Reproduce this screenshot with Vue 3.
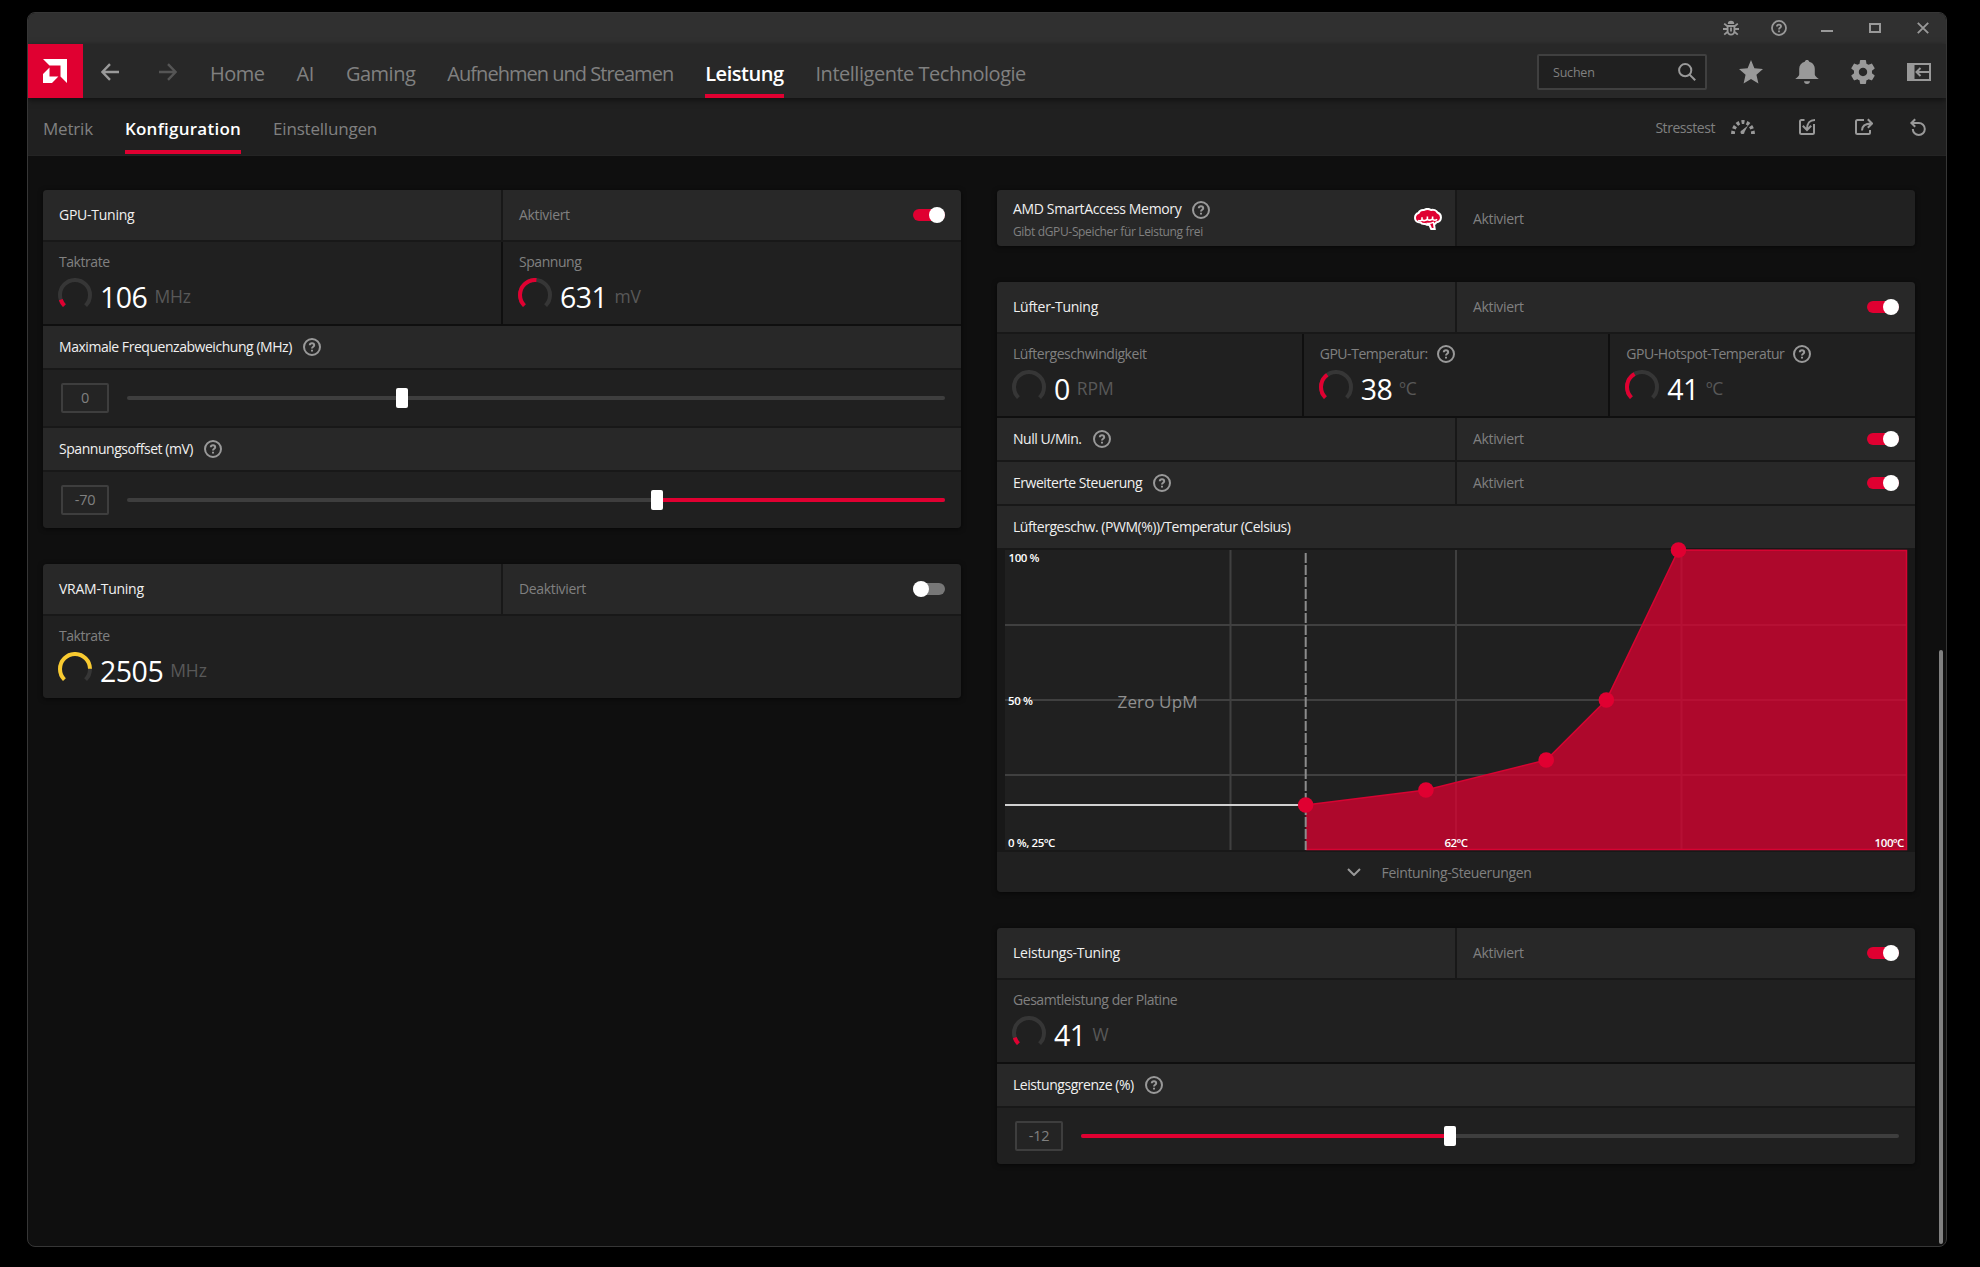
<template>
  <div class="desktop">
    <div class="window">
      <div class="titlebar">
        <svg class="icon" viewBox="0 0 16 16" width="16" height="16" fill="none" stroke="currentColor" stroke-width="1.8">
          <path d="M4.6 6h6.8v4.8a3.4 3.9 0 0 1-6.8 0zM4.4 6.2 1.2 3.6M11.6 6.2l3.2-2.6M0 9h4.6M11.4 9H16M1.2 14.6l3.4-2.8M14.8 14.6l-3.4-2.8M8 7.5v4" />
          <path d="M4.8 3.9a3.2 3.2 0 0 1 6.4 0z" fill="currentColor" stroke="none" />
        </svg>
        <svg class="icon" viewBox="0 0 18 18" width="16" height="16" fill="none" stroke="currentColor" stroke-width="2">
          <circle cx="9" cy="9" r="7.9" />
          <path d="M6.7 7.3C6.7 5.9 7.7 5.1 9 5.1s2.3.8 2.3 2.1c0 1.6-2.3 1.6-2.3 3.4M9 11.9v2" />
        </svg>
        <svg class="icon" viewBox="0 0 16 16" width="16" height="16"><path d="M2 10h12v2H2z" fill="currentColor" /></svg>
        <svg class="icon" viewBox="0 0 16 16" width="16" height="16"><path d="M3 4h10v8H3z" fill="none" stroke="currentColor" stroke-width="2" /></svg>
        <svg class="icon" viewBox="0 0 16 16" width="16" height="16"><path d="m2.8 2.8 10.4 10.4M13.2 2.8 2.8 13.2" fill="none" stroke="currentColor" stroke-width="1.9" /></svg>
      </div>

      <div class="navbar">
        <div class="logo">
          <svg viewBox="0 0 24 24" width="24" height="24" fill="#fff">
            <path d="M0 0h24v24l-6.5-6.5v-11h-11z" />
            <path d="M6.5 8.6v8.9h8.9L9 24H0v-8.9z" />
          </svg>
        </div>
        <svg class="arrow back" viewBox="0 0 18 18" width="18" height="18"><path d="M18 9H1.8M9 1.2 1.4 9 9 16.8" /></svg>
        <svg class="arrow forward" viewBox="0 0 18 18" width="18" height="18"><path d="M0 9h16.2M9 1.2 16.6 9 9 16.8" /></svg>
        <nav class="tabs">
          <a v-for="tab in mainTabs" :key="tab.title" :class="['tab', { active: tab.active, tight: tab.tight }]">{{ tab.title }}</a>
        </nav>
        <div class="search">
          <span>Suchen</span>
          <svg class="icon" viewBox="0 0 18 18" width="18" height="18" fill="none" stroke="currentColor" stroke-width="2">
            <circle cx="7.2" cy="7.2" r="6.1" />
            <path d="m11.6 11.6 5.6 5.6" />
          </svg>
        </div>
        <div class="nav-icons">
          <svg class="icon" viewBox="2 2 20 19" width="24" height="23.5" preserveAspectRatio="none" fill="currentColor">
            <path d="M12 17.27 18.18 21l-1.64-7.03L22 9.24l-7.19-.61L12 2 9.19 8.63 2 9.24l5.46 4.73L5.82 21z" />
          </svg>
          <svg class="icon" viewBox="0 0 24 24" width="24" height="24" fill="currentColor">
            <path d="M12 0c1.2 0 2 .7 2.2 1.7 3.7.9 5.6 3.8 5.6 7.3v5.5c0 1.4 1.6 2.6 4 4.5H.2c2.4-1.9 4-3.1 4-4.5V9c0-3.5 1.9-6.4 5.6-7.3C10 .7 10.8 0 12 0zM9 21.3h6c0 1.5-1.2 2.7-3 2.7s-3-1.2-3-2.7z" />
          </svg>
          <svg class="icon" viewBox="2 2 20 20" width="24" height="24" fill="currentColor">
            <path d="M19.43 12.98c.04-.32.07-.64.07-.98s-.03-.66-.07-.98l2.11-1.65c.19-.15.24-.42.12-.64l-2-3.46c-.12-.22-.39-.3-.61-.22l-2.49 1c-.52-.4-1.08-.73-1.69-.98l-.38-2.65C14.46 2.18 14.25 2 14 2h-4c-.25 0-.46.18-.49.42l-.38 2.65c-.61.25-1.17.59-1.69.98l-2.49-1c-.23-.09-.49 0-.61.22l-2 3.46c-.13.22-.07.49.12.64l2.11 1.65c-.04.32-.07.65-.07.98s.03.66.07.98l-2.11 1.65c-.19.15-.24.42-.12.64l2 3.46c.12.22.39.3.61.22l2.49-1c.52.4 1.08.73 1.69.98l.38 2.65c.03.24.24.42.49.42h4c.25 0 .46-.18.49-.42l.38-2.65c.61-.25 1.17-.59 1.69-.98l2.49 1c.23.09.49 0 .61-.22l2-3.46c.12-.22.07-.49-.12-.64l-2.11-1.65zM12 15.5c-1.93 0-3.5-1.57-3.5-3.5s1.57-3.5 3.5-3.5 3.5 1.57 3.5 3.5-1.57 3.5-3.5 3.5z" />
          </svg>
          <svg class="icon" viewBox="0 0 24 18" width="24" height="18" fill="none" stroke="currentColor" stroke-width="2">
            <path d="M1 1h22v16H1zM23 9H9.5M13.5 5 9.5 9l4 4" />
            <path d="M0 0h7.5v18H0z" fill="currentColor" stroke="none" />
          </svg>
        </div>
      </div>

      <div class="subbar">
        <nav class="subtabs">
          <a v-for="tab in subTabs" :key="tab" :class="['tab', { active: tab === 'Konfiguration' }]">{{ tab }}</a>
        </nav>
        <div class="tools">
          <span class="stress-label">Stresstest</span>
          <svg class="icon stress" viewBox="0 0 24 14" width="24" height="14">
            <path d="M2 14A10 12 0 0 1 22 14" pathLength="90" fill="none" stroke="currentColor" stroke-width="3.8" stroke-dasharray="8 5.66" />
            <path d="m11 10.2 6-4.7-3.5 6.5a2 2 0 1 1-2.5-1.8z" fill="currentColor" />
          </svg>
          <svg class="icon" viewBox="0 0 18 18" width="18" height="18" fill="none" stroke="currentColor" stroke-width="2">
            <path d="M6.5 2h-3A1.5 1.5 0 0 0 2 3.5v11A1.5 1.5 0 0 0 3.5 16h11a1.5 1.5 0 0 0 1.5-1.5V6M17 2c-5 0-8 2-8 9.5M4.8 7.8 9 12l4.2-4.2" />
          </svg>
          <svg class="icon" viewBox="0 0 18 18" width="18" height="18" fill="none" stroke="currentColor" stroke-width="2">
            <path d="M9 2H2.5A1.5 1.5 0 0 0 1 3.5v11A1.5 1.5 0 0 0 2.5 16h11a1.5 1.5 0 0 0 1.5-1.5V12M7 12.5C7 8 10 5.500 16.5 5.500M12.8 1.3 17 5.500l-4.2 4.2" />
          </svg>
          <svg class="icon undo" viewBox="0 0 18 18" width="18" height="18" fill="none" stroke="currentColor" stroke-width="2">
            <path d="M2.5 5h7.3a6 6 0 1 1-6 6M6.2 1.2 2.4 5l3.8 3.8" />
          </svg>
        </div>
      </div>

      <main class="content">
        <div v-for="(column, c) in columns" :key="c" class="column">
          <section v-for="panel in column" :key="panel.id" class="panel">
            <div v-for="(row, r) in panel.rows" :key="r" :class="['row', row.type]">
              <!-- feature with a switch or a plain state -->
              <template v-if="row.type === 'header' || row.type === 'option' || row.type === 'feature'">
                <div class="cell">
                  <div class="caption">
                    <div class="title">
                      <span class="text">{{ row.title }}</span>
                      <svg v-if="row.help" class="help" viewBox="0 0 18 18"><use href="#help" /></svg>
                    </div>
                    <div v-if="row.subtitle" class="subtitle">{{ row.subtitle }}</div>
                  </div>
                  <svg v-if="row.subtitle" class="brain" viewBox="0 0 28 22" width="28" height="22">
                    <path class="brain-body" d="M4.5 5C5.5 2.6 8 1.7 10 2c2-1.3 5-1.3 7 0 2.5-.6 5.5.3 6.5 2.5 2.5 1 3.6 3.5 3.4 5.5-.1 2.5-2 4.3-4.5 4.2-.6 1.2-1.5 1.7-2.4 1.8l.7 5h-3.5l-1.7-4c-2 0-3.5-.3-4.3-1-2.2.3-3.9-.4-4.7-1.6C3 14.5 1 12.7 1 10c0-2.3 1.3-4.3 3.5-5z" />
                    <path class="brain-folds" d="M4 12.4c1.6.7 3.4.5 4-.9V9.2M8 12c1.6 1 4.4.7 5.4-1V8.5M13.4 11.5c1.5 1.1 4.2.8 5.2-.8V8.5M18.6 11.5c1.4.8 3.6.6 4.5-.2M12.5 15.3c2.5.5 5 0 7.5-1.2" />
                  </svg>
                </div>
                <div class="cell state">
                  <span class="text">{{ row.state }}</span>
                  <span v-if="row.on !== undefined" :class="['switch', { on: row.on }]"></span>
                </div>
              </template>

              <template v-else-if="row.type === 'metrics'">
                <div v-for="m in row.items" :key="m.label" class="cell metric">
                  <div class="metric-label">
                    <span class="text">{{ m.label }}</span>
                    <svg v-if="m.help" class="help" viewBox="0 0 18 18"><use href="#help" /></svg>
                  </div>
                  <div class="reading">
                    <svg class="gauge" viewBox="0 0 34 34" width="34" height="34">
                      <path class="gauge-track" :d="arc" />
                      <path v-if="m.level" :d="arc" pathLength="100" :stroke="m.color || '#e00031'" :stroke-dasharray="`${m.level} 200`" />
                    </svg>
                    <span class="value">{{ m.value }}</span>
                    <span class="unit">{{ m.unit }}</span>
                  </div>
                </div>
              </template>

              <div v-else-if="row.type === 'label'" class="cell">
                <div class="title">
                  <span class="text">{{ row.title }}</span>
                  <svg v-if="row.help" class="help" viewBox="0 0 18 18"><use href="#help" /></svg>
                </div>
              </div>

              <div v-else-if="row.type === 'slider'" class="cell">
                <div class="number">{{ row.value }}</div>
                <div class="track">
                  <div v-if="row.fill" class="fill" :style="{ left: row.fill[0] + '%', width: row.fill[1] - row.fill[0] + '%' }"></div>
                  <div class="handle" :style="{ left: row.pos + '%' }"></div>
                </div>
              </div>

              <svg v-else-if="row.type === 'chart'" class="curve" viewBox="0 0 902 300" width="902" height="300">
                <rect class="plot" width="902" height="300" />
                <path class="grid" d="M0 75h902M0 150h902M0 225h902M225.5 0v300M451 0v300M676.5 0v300" />
                <polygon class="area" :points="areaPoints" />
                <polyline class="line" :points="linePoints" />
                <path class="floor" d="M0 255h300" />
                <path class="limit" d="M300.7 3v297" />
                <circle v-for="p in fanPoints" :key="p.t" class="dot" :cx="p.x" :cy="p.y" r="7.8" />
                <text class="axis" x="3.5" y="12">100 %</text>
                <text class="axis" x="3" y="155">50 %</text>
                <text class="axis" x="3" y="297">0 %, 25ºC</text>
                <text class="axis" x="451" y="297" text-anchor="middle">62ºC</text>
                <text class="axis" x="899" y="297" text-anchor="end">100ºC</text>
                <text class="zero" x="112.5" y="158">Zero UpM</text>
              </svg>

              <div v-else class="cell">
                <svg class="icon" viewBox="0 0 14 8" width="14" height="8"><path d="m1 1 6 6 6-6" fill="none" stroke="currentColor" stroke-width="2" /></svg>
                {{ row.title }}
              </div>
            </div>
          </section>
        </div>
        <div class="scrollbar"></div>
      </main>
    </div>

    <svg class="sprite" width="0" height="0">
      <symbol id="help" viewBox="0 0 18 18">
        <g fill="none" stroke="#999" stroke-width="2">
          <circle cx="9" cy="9" r="8" />
          <path d="M6.8 7.3C6.8 6 7.7 5.2 9 5.2s2.2.8 2.2 2c0 1.5-2.2 1.6-2.2 3.3M9 11.7v1.9" />
        </g>
      </symbol>
    </svg>
  </div>
</template>

<script setup>
const mainTabs = [
  { title: 'Home' },
  { title: 'AI' },
  { title: 'Gaming' },
  { title: 'Aufnehmen und Streamen', tight: true },
  { title: 'Leistung', active: true },
  { title: 'Intelligente Technologie' }
]
const subTabs = ['Metrik', 'Konfiguration', 'Einstellungen']

const columns = [
  [
    {
      id: 'gpu',
      rows: [
        { type: 'header', title: 'GPU-Tuning', state: 'Aktiviert', on: true },
        {
          type: 'metrics',
          items: [
            { label: 'Taktrate', value: 106, unit: 'MHz', level: 10 },
            { label: 'Spannung', value: 631, unit: 'mV', level: 52 }
          ]
        },
        { type: 'label', title: 'Maximale Frequenzabweichung (MHz)', help: true },
        { type: 'slider', value: 0, pos: 33.6 },
        { type: 'label', title: 'Spannungsoffset (mV)', help: true },
        { type: 'slider', value: -70, pos: 64.8, fill: [64.8, 100] }
      ]
    },
    {
      id: 'vram',
      rows: [
        { type: 'header', title: 'VRAM-Tuning', state: 'Deaktiviert', on: false },
        { type: 'metrics', items: [{ label: 'Taktrate', value: 2505, unit: 'MHz', level: 83, color: '#f8ca30' }] }
      ]
    }
  ],
  [
    {
      id: 'sam',
      rows: [
        {
          type: 'feature',
          title: 'AMD SmartAccess Memory',
          subtitle: 'Gibt dGPU-Speicher für Leistung frei',
          help: true,
          state: 'Aktiviert'
        }
      ]
    },
    {
      id: 'fan',
      rows: [
        { type: 'header', title: 'Lüfter-Tuning', state: 'Aktiviert', on: true },
        {
          type: 'metrics',
          items: [
            { label: 'Lüftergeschwindigkeit', value: 0, unit: 'RPM', level: 0 },
            { label: 'GPU-Temperatur:', value: 38, unit: 'ºC', level: 37, help: true },
            { label: 'GPU-Hotspot-Temperatur', value: 41, unit: 'ºC', level: 39, help: true }
          ]
        },
        { type: 'option', title: 'Null U/Min.', help: true, state: 'Aktiviert', on: true },
        { type: 'option', title: 'Erweiterte Steuerung', help: true, state: 'Aktiviert', on: true },
        { type: 'label', title: 'Lüftergeschw. (PWM(%))/Temperatur (Celsius)' },
        { type: 'chart' },
        { type: 'more', title: 'Feintuning-Steuerungen' }
      ]
    },
    {
      id: 'power',
      rows: [
        { type: 'header', title: 'Leistungs-Tuning', state: 'Aktiviert', on: true },
        { type: 'metrics', items: [{ label: 'Gesamtleistung der Platine', value: 41, unit: 'W', level: 10 }] },
        { type: 'label', title: 'Leistungsgrenze (%)', help: true },
        { type: 'slider', value: -12, pos: 45.05, fill: [0, 45.05] }
      ]
    }
  ]
]

// 270 degree gauge
const arc = 'M6.4 27.6A15 15 0 1 1 27.6 27.6'

// fan curve: temperature 25-100 °C, speed 0-100 %
const fanPoints = [
  { t: 50, s: 15 },
  { t: 60, s: 20 },
  { t: 70, s: 30 },
  { t: 75, s: 50 },
  { t: 81, s: 100 }
].map(p => ({ ...p, x: ((p.t - 25) / 75) * 902, y: 300 - p.s * 3 }))

const curve = fanPoints.map(p => `${p.x},${p.y}`).join(' ')
const linePoints = `${curve} 901.5,0.5 901.5,299.5 ${fanPoints[0].x},299.5`
const areaPoints = `${curve} 902,0 902,300 ${fanPoints[0].x},300`
</script>

<style>
body {
  background: #000;
}
</style>

<style scoped>
.desktop {
  box-sizing: border-box;
  width: 1980px;
  height: 1267px;
  padding: 12px 33px 20px 27px;
  background: #000;
  color: #808080;
  font-family: 'Open Sans', 'Noto Sans', sans-serif;
  font-size: 14px;
  letter-spacing: -0.35px;
}

.desktop * {
  box-sizing: border-box;
}

.desktop svg {
  display: block;
  flex: none;
}

.desktop .sprite {
  position: absolute;
}

.window {
  display: flex;
  flex-direction: column;
  height: 1235px;
  border: 1px solid #363636;
  border-radius: 8px;
  background: #0f0f0f;
  overflow: hidden;
}

.icon {
  color: #999;
}

/* Title bar */
.titlebar {
  display: flex;
  align-items: center;
  justify-content: flex-end;
  gap: 32px;
  height: 31px;
  padding: 0 15px 1px 0;
  background: #303030;
}

/* Main navigation */
.navbar {
  position: relative;
  z-index: 1;
  display: flex;
  align-items: center;
  height: 54px;
  padding: 2px 15px 0 0;
  background: #282828;
  box-shadow: 0 2px 6px rgba(0, 0, 0, 0.55);
}

.logo {
  display: flex;
  align-items: center;
  justify-content: center;
  width: 55px;
  height: 54px;
  margin-top: -2px;
  padding-right: 1px;
  background: #e00031;
}

.arrow {
  fill: none;
  stroke-width: 2.4;
}

.back {
  margin-left: 18px;
  stroke: #999;
}

.forward {
  margin-left: 40px;
  stroke: #555;
}

.tabs {
  display: flex;
  gap: 32px;
  height: 54px;
  margin: -2px 0 0 33px;
  font-size: 20px;
  letter-spacing: -0.48px;
  line-height: 59px;
  white-space: nowrap;
}

.tab.tight {
  letter-spacing: -0.97px;
}

.tab.active {
  border-bottom: 4px solid #e00031;
  color: #fff;
  font-weight: 600;
}

.search {
  display: flex;
  align-items: center;
  justify-content: space-between;
  width: 170px;
  height: 36px;
  margin-left: auto;
  padding: 0 9px 0 14px;
  border: 2px solid #404040;
  border-radius: 2px;
  background: #202020;
  font-size: 12.5px;
  letter-spacing: -0.2px;
}

.nav-icons {
  display: flex;
  align-items: center;
  gap: 32px;
  margin-left: 32px;
}

/* Sub navigation */
.subbar {
  display: flex;
  align-items: center;
  justify-content: space-between;
  height: 58px;
  padding: 0 19px 0 15px;
  border-bottom: 1px solid #242424;
  background: #202020;
}

.subtabs {
  display: flex;
  align-self: flex-start;
  gap: 32px;
  height: 56px;
  font-size: 17px;
  letter-spacing: -0.2px;
  line-height: 62px;
}

.subtabs .active {
  letter-spacing: 0.25px;
}

.tools {
  display: flex;
  align-items: center;
  gap: 39px;
}

.stress-label {
  padding-top: 2px;
  letter-spacing: -0.45px;
}

.stress {
  margin: 0 4px 0 -23px;
}

.undo {
  margin-left: -3px;
}

/* Content */
.content {
  position: relative;
  display: flex;
  align-items: flex-start;
  gap: 36px;
  flex: 1;
  padding: 34px 0 0 15px;
}

.column {
  display: flex;
  flex-direction: column;
  gap: 36px;
  width: 918px;
}

.panel {
  display: flex;
  flex-direction: column;
  gap: 2px;
  border-radius: 4px;
  background: #181818;
  box-shadow: 0 1px 5px rgba(0, 0, 0, 0.6);
}

.row {
  display: grid;
  grid-auto-flow: column;
  grid-auto-columns: 1fr;
  gap: 2px;
  height: 42px;
}

.row:first-child .cell:first-child {
  border-top-left-radius: 4px;
}

.row:first-child .cell:last-child {
  border-top-right-radius: 4px;
}

.row:last-child .cell:first-child {
  border-bottom-left-radius: 4px;
}

.row:last-child .cell:last-child {
  border-bottom-right-radius: 4px;
}

.cell {
  display: flex;
  align-items: center;
  justify-content: space-between;
  min-width: 0;
  padding: 0 16px;
  background: #282828;
  white-space: nowrap;
}

.text {
  padding-bottom: 2px;
}

.title,
.metric-label {
  display: flex;
  align-items: center;
  gap: 11px;
}

.title {
  color: #f0f0f0;
}

.help {
  width: 18px;
  height: 18px;
}

.header {
  height: 50px;
}

.header .title {
  letter-spacing: -0.25px;
}

.label .title {
  letter-spacing: -0.46px;
}

.option .title {
  letter-spacing: -0.46px;
}

.feature {
  height: 56px;
}

.feature .cell:first-child {
  padding-right: 13px;
}

.feature .state {
  background: #212121;
}

.feature .state .text {
  padding-bottom: 0;
}

.feature .title {
  height: 20px;
  margin-top: 4px;
}

.subtitle {
  margin-top: 3px;
  font-size: 12px;
  line-height: 18px;
}

.brain {
  margin-top: 2px;
}

.brain-body {
  fill: #e00031;
  stroke: #fff;
  stroke-width: 2;
}

.brain-folds {
  fill: none;
  stroke: #fff;
  stroke-width: 1.6;
}

.switch {
  position: relative;
  width: 32px;
  height: 12px;
  border-radius: 6px;
  background: #777;
}

.switch::after {
  content: '';
  position: absolute;
  top: -2px;
  left: 0;
  width: 16px;
  height: 16px;
  border-radius: 50%;
  background: #fff;
}

.switch.on {
  background: #e00031;
}

.switch.on::after {
  left: 16px;
}

/* Metrics */
.metrics {
  height: 82px;
  background: #0f0f0f;
  box-shadow: 0 2px #0f0f0f;
}

.panel .metrics:last-child {
  background: none;
  box-shadow: none;
}

.metric {
  flex-direction: column;
  align-items: flex-start;
  justify-content: flex-start;
  padding-top: 11px;
  background: #202020;
}

.metric-label {
  height: 19px;
  letter-spacing: -0.45px;
}

.metric-label .help {
  margin: -1px 0 0 -2px;
}

.reading {
  display: flex;
  align-items: flex-start;
  height: 40px;
  margin-left: -1px;
}

.gauge {
  margin-top: 6px;
  fill: none;
  stroke-width: 4;
}

.gauge-track {
  stroke: #363636;
}

.value {
  margin: 5px 0 0 8px;
  color: #fff;
  font-size: 28.5px;
  line-height: 40px;
  letter-spacing: -0.5px;
}

.unit {
  margin: 6px 0 0 7px;
  color: #585858;
  font-size: 17.5px;
  line-height: 36px;
  letter-spacing: -0.1px;
}

/* Sliders */
.slider {
  height: 56px;
}

.slider .cell {
  justify-content: flex-start;
  gap: 18px;
  padding-left: 18px;
  background: #202020;
}

.number {
  width: 48px;
  height: 30px;
  border: 2px solid #3e3e3e;
  border-radius: 2px;
  background: #242424;
  font-size: 14.5px;
  line-height: 26px;
  letter-spacing: -0.2px;
  text-align: center;
}

.track {
  position: relative;
  flex: 1;
  height: 4px;
  border-radius: 2px;
  background: #3e3e3e;
}

.fill {
  position: absolute;
  height: 4px;
  border-radius: 2px;
  background: #e00031;
}

.handle {
  position: absolute;
  top: -8px;
  width: 12px;
  height: 20px;
  margin-left: -6px;
  border-radius: 2px;
  background: #fff;
}

/* Fan curve */
.chart {
  height: 300px;
  padding: 0 8px;
}

.curve {
  overflow: visible;
}

.plot {
  fill: #202020;
}

.grid {
  stroke: #404040;
  stroke-width: 2;
}

.area {
  fill: #e00031;
  fill-opacity: 0.74;
}

.line {
  fill: none;
  stroke: #d60432;
  stroke-width: 1.5;
}

.floor {
  stroke: #d0d0d0;
  stroke-width: 2;
}

.limit {
  stroke: #8c8c8c;
  stroke-width: 2;
  stroke-dasharray: 10 2;
}

.dot {
  fill: #e00031;
}

.axis {
  fill: #fff;
  font-size: 11.5px;
  font-weight: 600;
  letter-spacing: -0.4px;
}

.zero {
  fill: #909090;
  font-size: 17px;
  font-weight: 500;
  letter-spacing: 0.15px;
}

.more {
  height: 40px;
}

.more .cell {
  justify-content: center;
  gap: 21px;
  padding-right: 50px;
  background: #202020;
}

.scrollbar {
  position: absolute;
  top: 494px;
  right: 3px;
  width: 4px;
  height: 594px;
  border-radius: 2px;
  background: #808080;
}
</style>
